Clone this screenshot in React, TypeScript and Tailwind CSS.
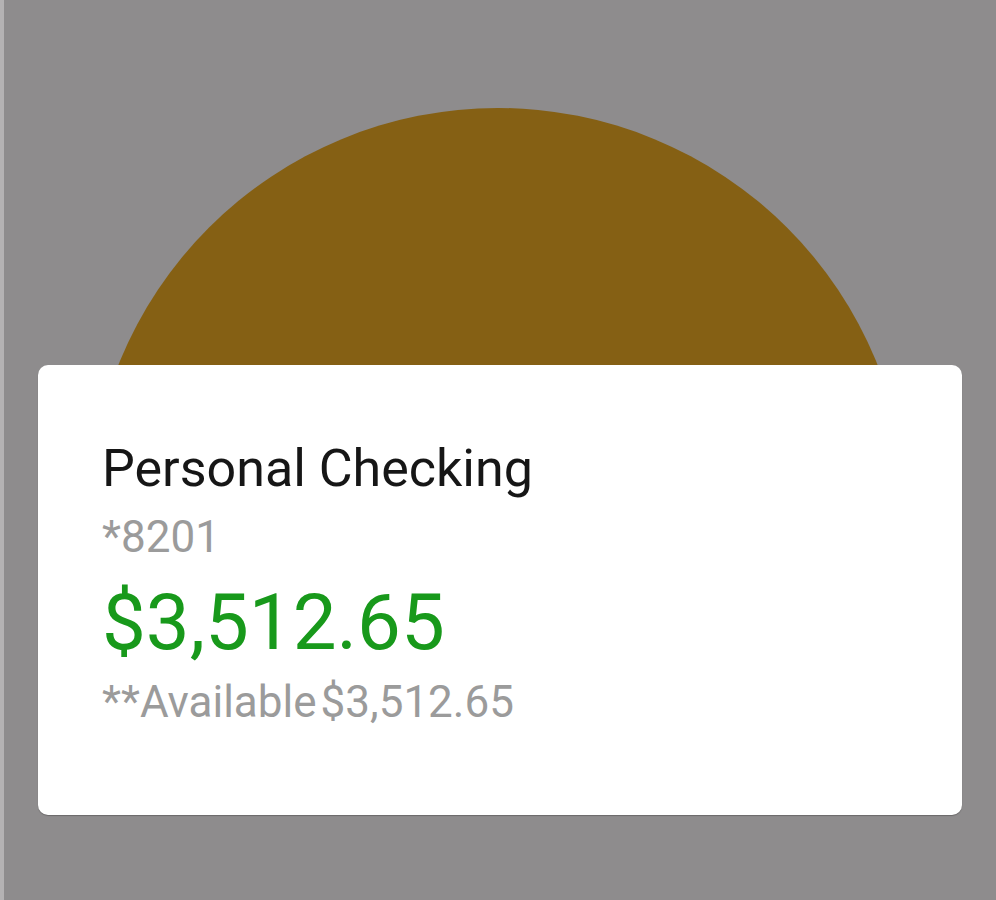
export default function App() {
  return (
    <div
      className="relative flex h-[900px] w-[996px] overflow-hidden bg-[#8e8c8d]"
      style={{ fontFamily: "Roboto, 'Noto Sans', sans-serif" }}
    >
      <div className="w-[4px] shrink-0 bg-[#b4b2b3]" />
      {/* brown disc, only its top shows above the card */}
      <div className="absolute left-0 top-0 h-[600px] w-full overflow-hidden">
        <div className="absolute left-[89px] top-[108px] h-[818px] w-[818px] rounded-full bg-[#856014]" />
      </div>
      <div className="relative flex-1 pl-[34px] pr-[34px] pt-[365px]">
        <div className="h-[450px] rounded-[10px] bg-white pl-[64px] pt-[78px] shadow-[0_1px_1px_rgba(0,0,0,0.25)]">
          <h2 className="text-[52px] leading-none text-[#161616]">Personal Checking</h2>
          <p className="mt-[20px] text-[44px] leading-none text-[#9b9b9b]">*8201</p>
          <p className="mt-[25px] text-[78px] leading-none text-[#18991b]">$3,512.65</p>
          <p className="mt-[18px] text-[44px] leading-none text-[#9b9b9b]">
            **Available<span className="ml-[4px]">$3,512.65</span>
          </p>
        </div>
      </div>
    </div>
  );
}
